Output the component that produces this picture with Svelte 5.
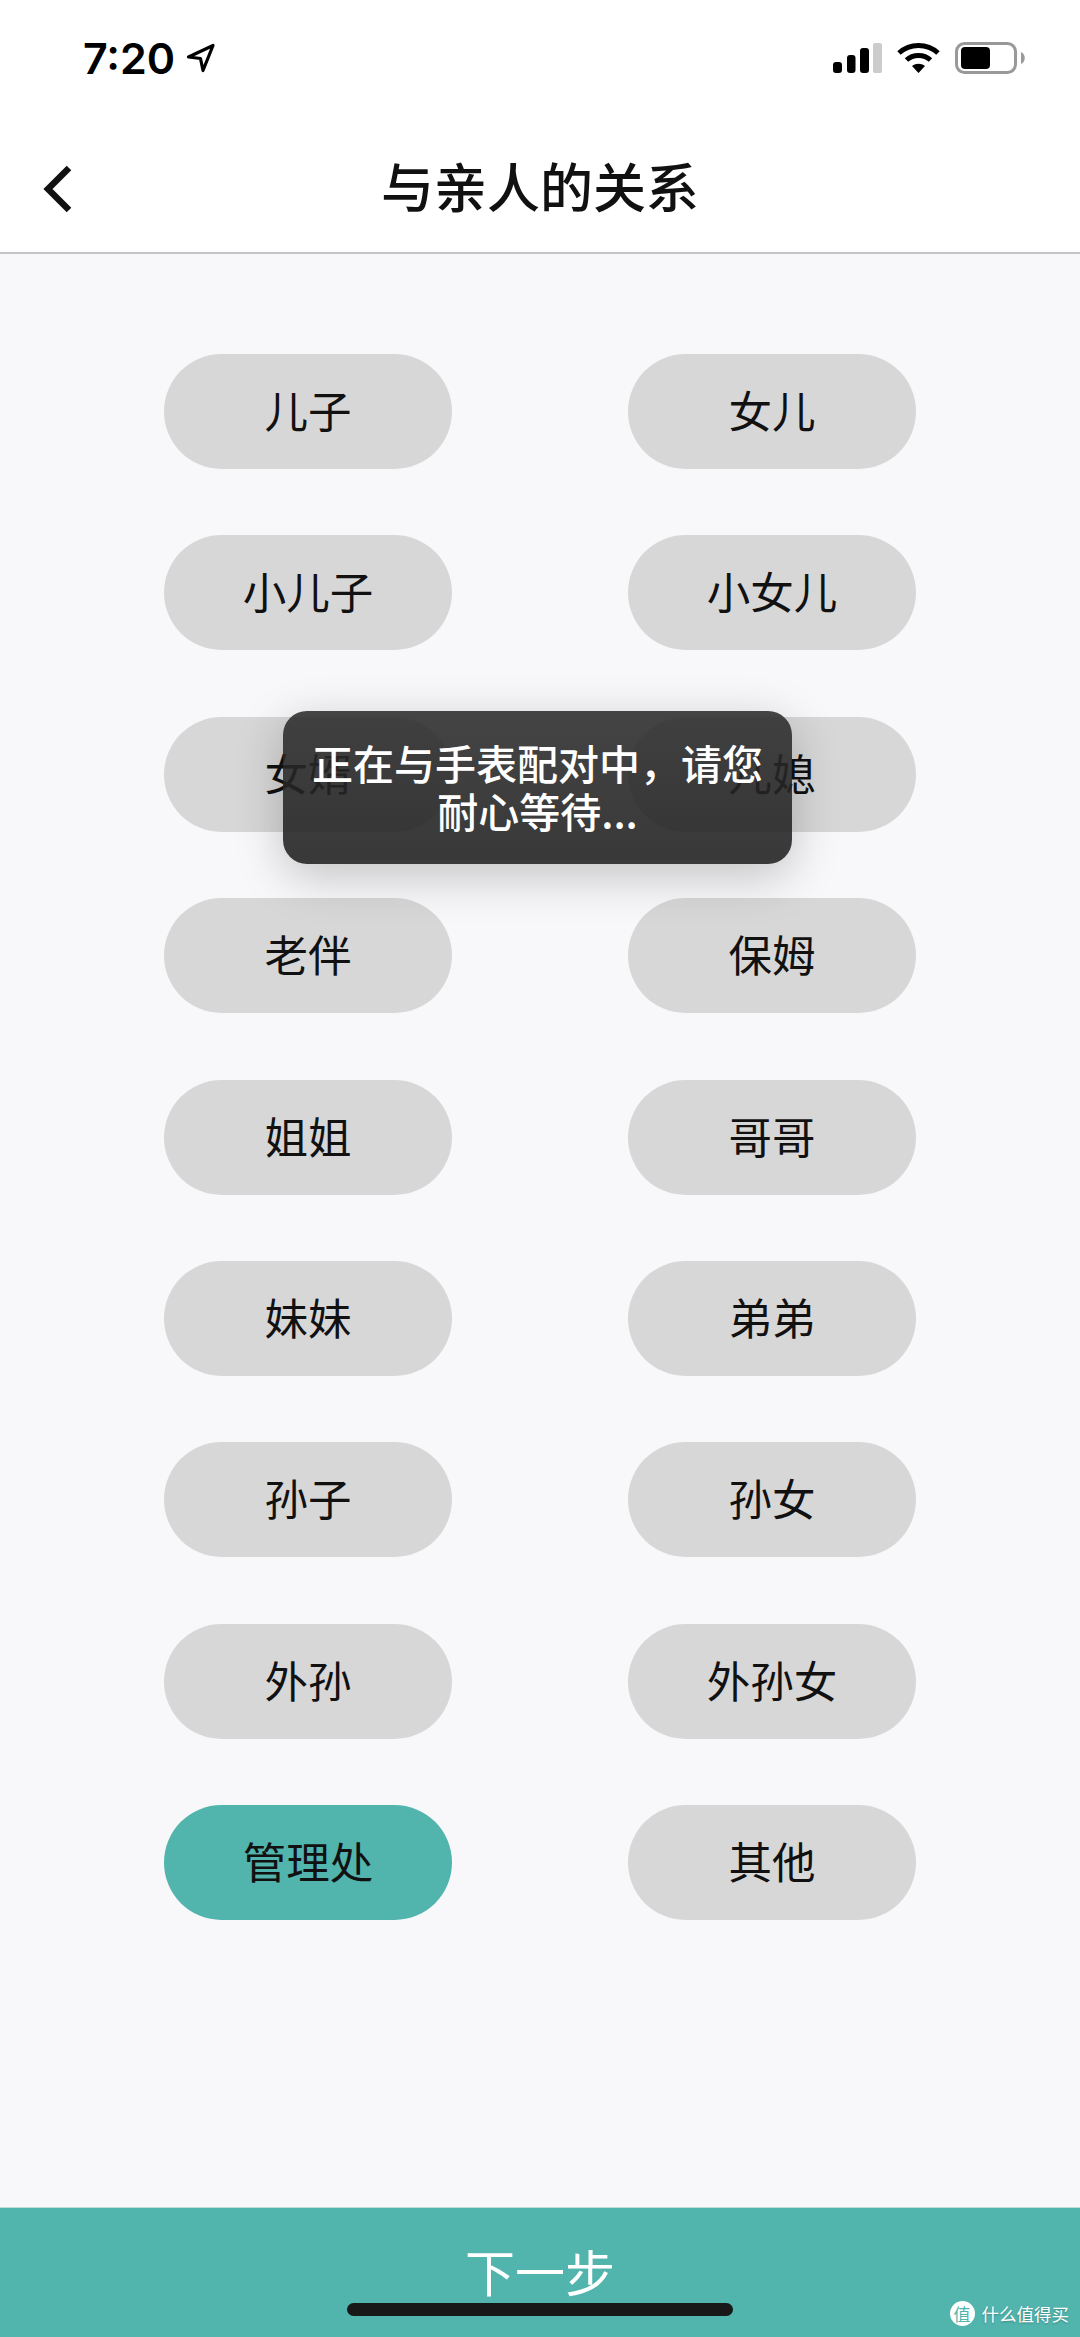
<script>
  const relations = ['儿子', '女儿', '小儿子', '小女儿', '女婿', '儿媳', '老伴', '保姆', '姐姐', '哥哥', '妹妹', '弟弟', '孙子', '孙女', '外孙', '外孙女', '管理处', '其他'];
  let selected = '管理处';
</script>

<div class="page">
  <div class="status">
    <div class="time">
      <span>7:20</span>
      <svg width="30" height="30" viewBox="0 0 30 30"><path d="M2.5 14 L27 2.5 L17 27.5 L14.5 15.5 Z" fill="none" stroke="#000" stroke-width="3.2" stroke-linejoin="round"/></svg>
    </div>
    <div class="icons">
      <svg width="49" height="32" viewBox="0 0 49 32">
        <rect x="0" y="20" width="9" height="11" rx="3" fill="#000"/>
        <rect x="14" y="13" width="8.5" height="18" rx="3" fill="#000"/>
        <rect x="27" y="6" width="9" height="25" rx="3" fill="#000"/>
        <rect x="40" y="1" width="9" height="30" rx="2" fill="#ccc"/>
      </svg>
      <svg width="43" height="32" viewBox="0 0 43 32">
        <path d="M2 11 C13 1 30 1 41 11" fill="none" stroke="#000" stroke-width="5"/>
        <path d="M9.5 18 C16 12 27 12 33.5 18" fill="none" stroke="#000" stroke-width="5"/>
        <path d="M15 24 C19 21 24 21 28 24 L21.5 31 Z" fill="#000"/>
      </svg>
      <svg width="71" height="32" viewBox="0 0 71 32">
        <rect x="1.5" y="1.5" width="59" height="29" rx="8" fill="none" stroke="#999" stroke-width="3"/>
        <rect x="6" y="5" width="29" height="22" rx="4" fill="#000"/>
        <path d="M66 10 C71 12 71 20 66 22 Z" fill="#999"/>
      </svg>
    </div>
  </div>

  <header class="nav">
    <svg class="back" width="34" height="50" viewBox="0 0 34 50"><path d="M28 4 L7 25 L28 46" fill="none" stroke="#111" stroke-width="6.5"/></svg>
    <h1>与亲人的关系</h1>
  </header>

  <main class="grid">
    {#each relations as name}
      <button class="pill" class:active={name === selected}>{name}</button>
    {/each}
  </main>

  <footer class="next">下一步</footer>

  <div class="toast">正在与手表配对中，请您<br />耐心等待...</div>
  <div class="home"></div>
  <div class="mark">
    <span class="badge">值</span>
    <span>什么值得买</span>
  </div>
</div>

<style>
  :global(body) {
    margin: 0;
  }
  .page {
    position: relative;
    width: 1080px;
    height: 2337px;
    display: flex;
    flex-direction: column;
    overflow: hidden;
    background: #f8f8fa;
    font-family: "Noto Sans CJK SC", "Noto Sans", sans-serif;
    color: #111;
  }
  .status {
    height: 116px;
    box-sizing: border-box;
    padding: 36px 54px 0 83px;
    display: flex;
    justify-content: space-between;
    align-items: flex-start;
    background: #fff;
  }
  .time {
    display: flex;
    align-items: center;
    gap: 11px;
    font-family: Inter, "Liberation Sans", sans-serif;
    font-size: 43px;
    font-weight: 600;
    line-height: 44px;
    color: #000;
  }
  .icons {
    display: flex;
    align-items: center;
    gap: 15px;
    padding-top: 6px;
  }
  .nav {
    height: 138px;
    position: relative;
    display: flex;
    align-items: center;
    justify-content: center;
    box-sizing: border-box;
    background: #fff;
    border-bottom: 2px solid #c4c4c6;
  }
  .back {
    position: absolute;
    left: 41px;
    top: 48px;
  }
  h1 {
    margin: 0;
    font-size: 53px;
    font-weight: 500;
    line-height: 60px;
    position: relative;
    top: 1px;
  }
  .grid {
    flex: 1;
    display: grid;
    grid-template-columns: 288px 288px;
    grid-auto-rows: 115px;
    justify-content: center;
    column-gap: 176px;
    row-gap: 66.4px;
    padding: 100px 0 0;
    box-sizing: border-box;
  }
  .pill {
    border: none;
    padding: 0 0 3px;
    border-radius: 58px;
    background: #d7d7d7;
    color: #111;
    font-family: inherit;
    font-size: 43.5px;
    line-height: 112px;
  }
  .pill.active {
    background: #51b4ad;
  }
  .next {
    height: 130px;
    box-sizing: border-box;
    border-top: 1px solid #c4dcd9;
    background: #51b4ad;
    color: #fff;
    font-size: 50px;
    font-weight: 400;
    line-height: 60px;
    padding-top: 32px;
    text-align: center;
  }
  .toast {
    position: absolute;
    left: 283px;
    top: 711px;
    width: 509px;
    height: 153px;
    box-sizing: border-box;
    padding-top: 27px;
    border-radius: 24px;
    background: linear-gradient(rgba(43, 43, 43, 0.88), rgba(30, 30, 30, 0.88));
    box-shadow: 0 12px 48px rgba(0, 0, 0, 0.22);
    color: #fff;
    font-size: 41px;
    font-weight: 500;
    line-height: 48px;
    text-align: center;
  }
  .home {
    position: absolute;
    left: 347px;
    top: 2303px;
    width: 386px;
    height: 13px;
    border-radius: 7px;
    background: #181818;
  }
  .mark {
    position: absolute;
    right: 11px;
    top: 2301px;
    display: flex;
    align-items: center;
    gap: 7px;
    color: #fff;
    font-size: 17.5px;
    line-height: 25px;
    text-shadow: 0 1px 2px rgba(0, 0, 0, 0.25);
  }
  .badge {
    width: 25px;
    height: 25px;
    border-radius: 50%;
    background: #fff;
    color: #51b4ad;
    font-size: 17px;
    line-height: 25px;
    text-align: center;
    text-shadow: none;
  }
</style>
